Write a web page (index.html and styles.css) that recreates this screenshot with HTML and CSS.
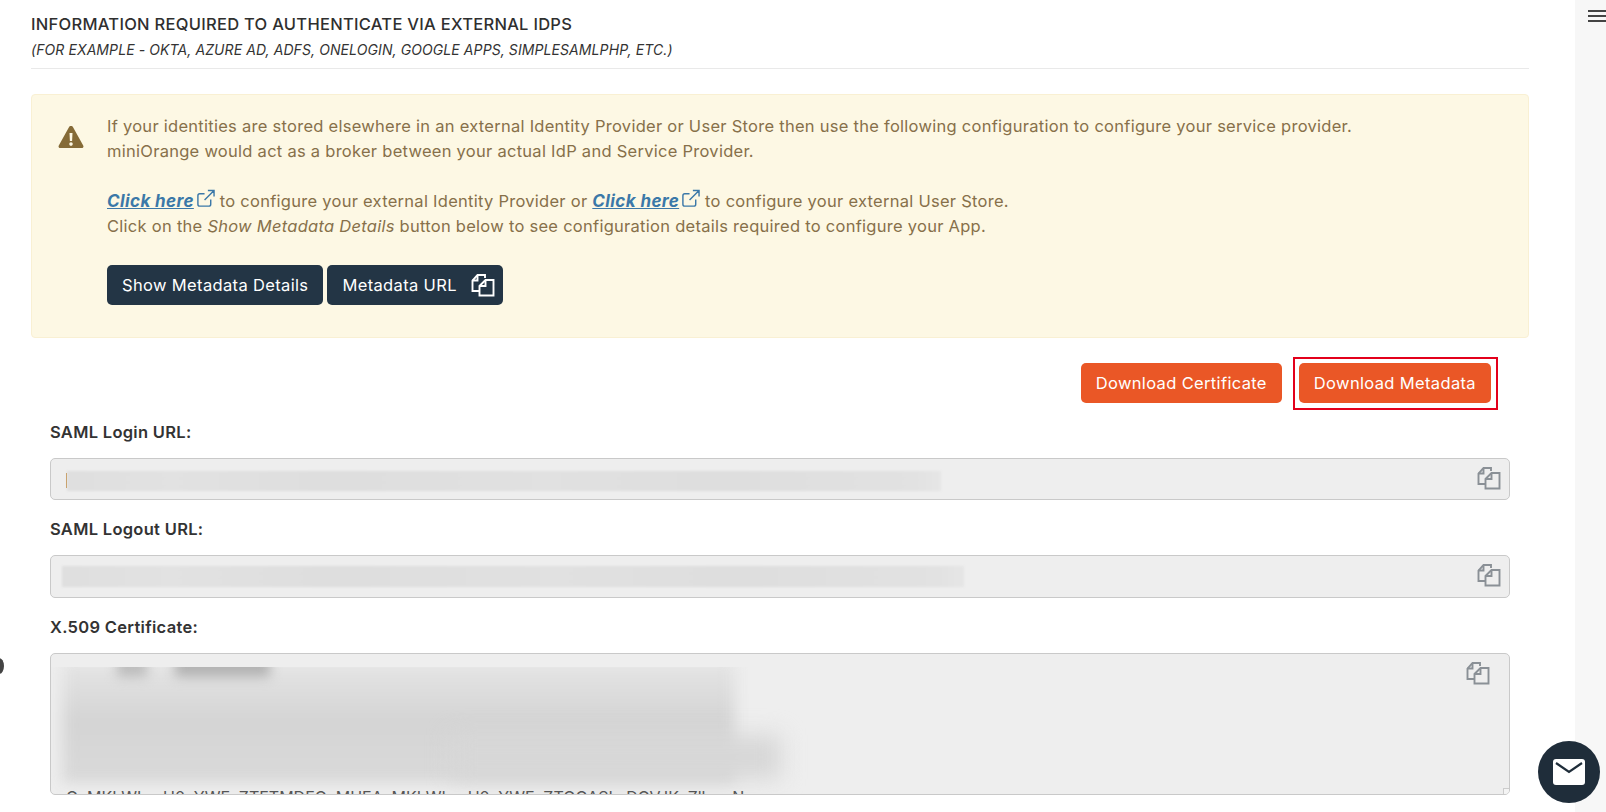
FILE: index.html
```html
<!DOCTYPE html>
<html lang="en">
<head>
<meta charset="utf-8">
<title>External IdP configuration</title>
<link rel="stylesheet" href="styles.css">
</head>
<body>
<div class="page">
  <span class="edge-dot"></span>
  <main class="main">
    <header class="head">
      <h1 class="title">INFORMATION REQUIRED TO AUTHENTICATE VIA EXTERNAL IDPS</h1>
      <p class="subtitle">(FOR EXAMPLE - OKTA, AZURE AD, ADFS, ONELOGIN, GOOGLE APPS, SIMPLESAMLPHP, ETC.)</p>
    </header>
    <section class="alert">
      <svg class="warn" viewBox="0 0 26 24"><path fill-rule="evenodd" d="M13 1c1 0 1.700.5 2.200 1.400l10 18c.8 1.500-.1 2.600-1.700 2.600H2.500C.9 23 0 21.900.8 20.400l10-18C11.300 1.500 12 1 13 1zM11.500 8l.4 8h2.200l.4-8zM13 17.300a1.800 1.800 0 1 0 0 3.600 1.800 1.800 0 0 0 0-3.600z"/></svg>
      <div class="alert-body">
        <p class="line">If your identities are stored elsewhere in an external Identity Provider or User Store then use the following configuration to configure your service provider.</p>
        <p class="line">miniOrange would act as a broker between your actual IdP and Service Provider.</p>
        <p class="line gap-top"><a class="link" href="#">Click here</a><svg class="ext" viewBox="0 0 20 20"><path d="M15.500 11v5a2 2 0 0 1-2 2H4a2 2 0 0 1-2-2V7a2 2 0 0 1 2-2h5M12.500 1.500H19V8M19 1.500 9 11.500"/></svg> to configure your external Identity Provider or <a class="link" href="#">Click here</a><svg class="ext" viewBox="0 0 20 20"><path d="M15.500 11v5a2 2 0 0 1-2 2H4a2 2 0 0 1-2-2V7a2 2 0 0 1 2-2h5M12.500 1.500H19V8M19 1.500 9 11.500"/></svg> to configure your external User Store.</p>
        <p class="line">Click on the <em>Show Metadata Details</em> button below to see configuration details required to configure your App.</p>
        <div class="alert-actions">
          <button class="btn btn-dark">Show Metadata Details</button>
          <button class="btn btn-dark btn-icon">Metadata URL
            <svg class="copy copy-light" viewBox="0 0 24 24"><use href="#copy-shape"/></svg>
          </button>
        </div>
      </div>
    </section>
    <div class="downloads">
      <button class="btn btn-orange btn-cert">Download Certificate</button>
      <span class="highlight"><button class="btn btn-orange">Download Metadata</button></span>
    </div>
    <section class="fields">
      <div class="field">
        <label class="label">SAML Login URL:</label>
        <div class="box box-line">
          <div class="smear smear-login"></div>
          <span class="caret"></span>
          <svg class="copy copy-grey copy-line" viewBox="0 0 24 24"><use href="#copy-shape"/></svg>
        </div>
      </div>
      <div class="field">
        <label class="label">SAML Logout URL:</label>
        <div class="box box-line box-tall">
          <div class="smear smear-logout"></div>
          <svg class="copy copy-grey copy-line" viewBox="0 0 24 24"><use href="#copy-shape"/></svg>
        </div>
      </div>
      <div class="field">
        <label class="label">X.509 Certificate:</label>
        <div class="box box-area">
          <div class="smear-area">
            <div class="sa sa-main"></div>
            <div class="sa sa-right"></div>
            <div class="sa sa-blob1"></div>
            <div class="sa sa-blob2"></div>
          </div>
          <p class="cert">OxMKLWIwxU0xYWExZTETMDEQxMUEAxMKLWIwxU0xYWExZTQQASLxDQVJKxZlkwxN</p>
          <svg class="copy copy-grey copy-area" viewBox="0 0 24 24"><use href="#copy-shape"/></svg>
          <span class="grip"></span>
        </div>
      </div>
    </section>
  </main>
  <aside class="side">
    <div class="burger"><span></span><span></span><span></span></div>
  </aside>
  <button class="chat" aria-label="Contact us">
    <svg viewBox="0 0 34 28"><path fill="#fff" d="M4 1h26a3 3 0 0 1 3 3v20a3 3 0 0 1-3 3H4a3 3 0 0 1-3-3V4a3 3 0 0 1 3-3z"/><path fill="none" stroke="#1f2d3a" stroke-width="2.200" d="M4 5l13 9 13-9"/></svg>
  </button>
</div>
<svg class="defs" aria-hidden="true"><defs><g id="copy-shape" fill="none" stroke="currentColor" stroke-width="1.900"><path d="M14 5V2H6.500L1.500 7.500V18H8"/><path d="M6.500 2v5.500h-5"/><path d="M22.500 7H14.500L8.500 13v9.500h14z"/><path d="M14.500 7v6h-6"/></g></defs></svg>
</body>
</html>
```
FILE: styles.css
```css
* { box-sizing: border-box; }
html, body { margin: 0; height: 100%; background: #fff; overflow: hidden; }
body { font-family: "Inter", "Liberation Sans", sans-serif; color: #2c2c2c; }
.defs { width: 0; height: 0; position: absolute; }
.page { display: flex; height: 812px; position: relative; overflow: hidden; }
.main { width: 1575px; padding: 13px 46px 0 31px; flex: none; }
.side { flex: 1; background: #f7f7f7; padding: 10px 0 0 13px; }
.burger { display: flex; flex-direction: column; gap: 3px; }
.burger span { display: block; height: 2px; width: 20px; background: #444; }
.head { border-bottom: 1px solid #e9e9e9; height: 56px; }
.title { margin: 0; font-size: 16.500px; line-height: 22px; font-weight: 500; color: #2f2f2f; letter-spacing: .28px; }
.subtitle { margin: 4px 0 0; font-size: 14px; line-height: 22px; font-style: italic; color: #333; letter-spacing: .09px; }
.alert { margin-top: 25px; height: 244px; background: #fdf8e4; border: 1px solid #f9f0d3; border-radius: 4px; display: flex; padding: 19px 0 0 26px; color: #87704a; }
.warn { width: 26px; height: 24px; fill: #856b37; flex: none; margin-top: 11px; }
.alert-body { margin-left: 23px; }
.line { margin: 0; font-size: 16.500px; line-height: 25px; white-space: nowrap; letter-spacing: .27px; }
.gap-top { margin-top: 25px; }
.link { color: #3b78a8; font-weight: 700; font-style: italic; font-size: 17px; letter-spacing: .4px; }
.ext { width: 19px; height: 19px; margin-left: 2px; vertical-align: -1px; fill: none; stroke: #3b78a8; stroke-width: 1.500; }
.alert-actions { display: flex; gap: 4px; margin-top: 26px; }
.btn { font: inherit; font-size: 16.500px; border: 0; border-radius: 5px; height: 40px; padding: 0 15px; color: #fff; white-space: nowrap; letter-spacing: .35px; }
.btn-dark { background: #233545; }
.btn-icon { display: flex; align-items: center; gap: 14px; padding-right: 8px; }
.btn-orange { background: #ea5726; }
.copy { width: 24px; height: 24px; flex: none; }
.copy-light { color: #fff; }
.copy-grey { color: #8a9096; }
.downloads { display: flex; justify-content: flex-end; align-items: flex-start; margin-top: 19px; padding-right: 31px; gap: 11px; height: 53px; }
.btn-cert { margin-top: 6px; }
.highlight { border: 2px solid #e3001b; padding: 4px 5px 0 4px; height: 53px; background: #fff; display: block; }
.fields { display: flex; flex-direction: column; margin-top: 10px; padding: 0 19px; }
.field { display: flex; flex-direction: column; }
.label { font-size: 16.500px; line-height: 24px; font-weight: 600; color: #333; letter-spacing: .3px; }
.box { position: relative; margin-top: 14px; background: #eee; border: 1px solid #c9c9c9; border-radius: 5px; }
.box-line { height: 42px; margin-bottom: 17px; }
.box-tall { height: 43px; }
.box-area { height: 142px; overflow: hidden; }
.smear { position: absolute; height: 20px; background: linear-gradient(90deg, #dfdfdf, #e2e2e2 12%, #dedede 30%, #e1e1e1 55%, #dedede 75%, #e2e2e2 97%, #e6e6e6); filter: blur(1px); }
.smear-login { left: 16px; top: 12px; width: 874px; }
.smear-logout { left: 11px; top: 10px; width: 902px; height: 21px; }
.caret { position: absolute; left: 15px; top: 14px; width: 1px; height: 15px; background: #c9a36f; }
.smear-area { position: absolute; left: 0; right: 0; top: 13px; height: 127px; overflow: hidden; }
.sa { position: absolute; }
.sa-main { left: 11px; top: -8px; width: 673px; height: 124px; background: linear-gradient(180deg, #e6e6e6 0, #dedede 22%, #d4d4d4 50%, #d8d8d8 85%); filter: blur(7px); }
.sa-right { left: 400px; top: 68px; width: 330px; height: 44px; background: #d7d7d7; filter: blur(11px); }
.sa-blob1 { left: 66px; top: -12px; width: 30px; height: 22px; background: #bcbcbc; filter: blur(6px); }
.sa-blob2 { left: 124px; top: -12px; width: 95px; height: 22px; background: #b2b2b2; filter: blur(6px); }
.cert { position: absolute; left: 15px; top: 135px; margin: 0; font-size: 16px; line-height: 16px; white-space: nowrap; color: #555; }
.copy-line { position: absolute; right: 8px; top: 7px; }
.copy-area { position: absolute; right: 19px; top: 7px; }
.grip { position: absolute; right: 0; bottom: 0; width: 6px; height: 6px; background: #f4f4f4; border-top: 1px solid #ccc; border-left: 1px solid #ccc; }
.chat { position: absolute; left: 1538px; top: 741px; width: 62px; height: 62px; border: 0; border-radius: 50%; background: #1f2d3a; display: flex; align-items: center; justify-content: center; padding: 0; }
.chat svg { width: 34px; height: 28px; }
.edge-dot { position: absolute; left: -6px; top: 658px; width: 10px; height: 16px; border-radius: 50%; background: #444; }
```
